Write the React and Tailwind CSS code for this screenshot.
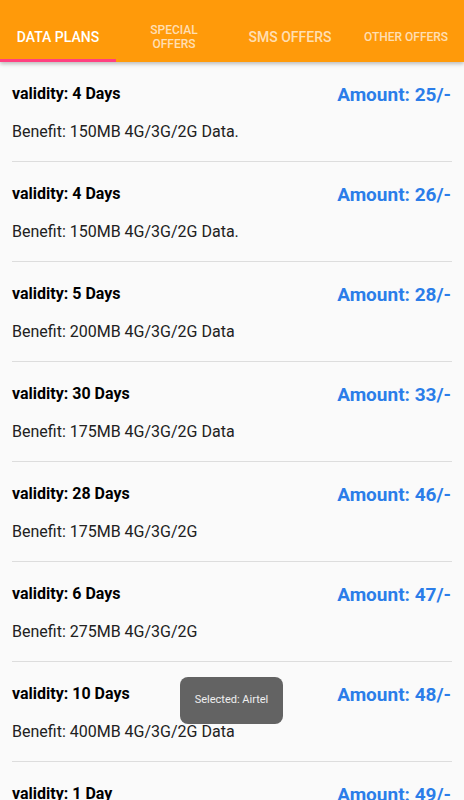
import React from "react";

const plans = [
  ["4 Days", "25", "150MB 4G/3G/2G Data."],
  ["4 Days", "26", "150MB 4G/3G/2G Data."],
  ["5 Days", "28", "200MB 4G/3G/2G Data"],
  ["30 Days", "33", "175MB 4G/3G/2G Data"],
  ["28 Days", "46", "175MB 4G/3G/2G"],
  ["6 Days", "47", "275MB 4G/3G/2G"],
  ["10 Days", "48", "400MB 4G/3G/2G Data"],
  ["1 Day", "49", "100MB 4G/3G/2G Data"],
];

export default function App() {
  return (
    <div
      className="relative w-[464px] h-[800px] overflow-hidden bg-[#fafafa]"
      style={{ fontFamily: "Roboto, 'Noto Sans', sans-serif" }}
    >
      <div className="relative z-10 h-[62px] bg-[#ff9a0a] flex shadow-[0_2px_4px_rgba(0,0,0,0.25)]">
        <div className="relative w-[116px] h-full pt-[12px] flex items-center justify-center text-white text-[14px] font-medium">
          DATA PLANS
          <div className="absolute left-0 bottom-0 w-full h-[3px] bg-[#ff4081]" />
        </div>
        <div className="w-[116px] h-full pt-[12px] flex items-center justify-center text-center text-white/70 text-[12px] font-medium leading-[14px]">
          SPECIAL
          <br />
          OFFERS
        </div>
        <div className="w-[116px] h-full pt-[12px] flex items-center justify-center text-white/70 text-[14px] font-medium">
          SMS OFFERS
        </div>
        <div className="w-[116px] h-full pt-[12px] flex items-center justify-center text-white/70 text-[12px] font-medium">
          OTHER OFFERS
        </div>
      </div>
      <div className="px-3">
        {plans.map(([v, a, b], i) => (
          <div key={i} className="border-b border-[#dddddd] pt-[22px] pb-[19px] h-[100px]">
            <div className="flex items-start justify-between">
              <div className="text-[16px] leading-[20px] font-bold text-black">validity: {v}</div>
              <div className="-mt-[1px] text-[19px] leading-[24px] font-bold text-[#2b7de9] mr-[1px]">Amount: {a}/-</div>
            </div>
            <div className="mt-[15px] text-[16px] leading-[20px] text-[#212121]">Benefit: {b}</div>
          </div>
        ))}
      </div>
      <div className="absolute left-[180px] top-[677px] w-[103px] h-[47px] rounded-lg bg-[#636363] flex items-center justify-center text-white/90 text-[11px]">
        Selected: Airtel
      </div>
    </div>
  );
}
